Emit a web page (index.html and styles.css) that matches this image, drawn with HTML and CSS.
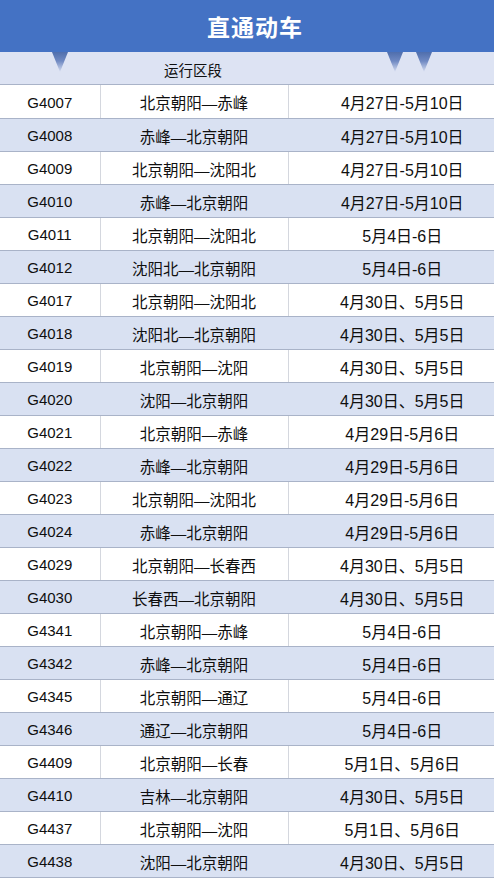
FILE: index.html
```html
<!DOCTYPE html>
<html lang="zh">
<head>
<meta charset="utf-8">
<link rel="stylesheet" href="styles.css">
</head>
<body>
<div class="page">
  <div class="title">直通动车</div>
  <div class="subhead">
    <span class="sub-label">运行区段</span>
    <span class="tri t1"></span>
    <span class="tri t2"></span>
    <span class="tri t3"></span>
  </div>
  <table class="grid">
    <colgroup><col class="c1"><col class="c2"><col class="c3"></colgroup>
    <tbody>
      <tr><td>G4007</td><td>北京朝阳—赤峰</td><td>4月27日-5月10日</td></tr>
      <tr><td>G4008</td><td>赤峰—北京朝阳</td><td>4月27日-5月10日</td></tr>
      <tr><td>G4009</td><td>北京朝阳—沈阳北</td><td>4月27日-5月10日</td></tr>
      <tr><td>G4010</td><td>赤峰—北京朝阳</td><td>4月27日-5月10日</td></tr>
      <tr><td>G4011</td><td>北京朝阳—沈阳北</td><td>5月4日-6日</td></tr>
      <tr><td>G4012</td><td>沈阳北—北京朝阳</td><td>5月4日-6日</td></tr>
      <tr><td>G4017</td><td>北京朝阳—沈阳北</td><td>4月30日、5月5日</td></tr>
      <tr><td>G4018</td><td>沈阳北—北京朝阳</td><td>4月30日、5月5日</td></tr>
      <tr><td>G4019</td><td>北京朝阳—沈阳</td><td>4月30日、5月5日</td></tr>
      <tr><td>G4020</td><td>沈阳—北京朝阳</td><td>4月30日、5月5日</td></tr>
      <tr><td>G4021</td><td>北京朝阳—赤峰</td><td>4月29日-5月6日</td></tr>
      <tr><td>G4022</td><td>赤峰—北京朝阳</td><td>4月29日-5月6日</td></tr>
      <tr><td>G4023</td><td>北京朝阳—沈阳北</td><td>4月29日-5月6日</td></tr>
      <tr><td>G4024</td><td>赤峰—北京朝阳</td><td>4月29日-5月6日</td></tr>
      <tr><td>G4029</td><td>北京朝阳—长春西</td><td>4月30日、5月5日</td></tr>
      <tr><td>G4030</td><td>长春西—北京朝阳</td><td>4月30日、5月5日</td></tr>
      <tr><td>G4341</td><td>北京朝阳—赤峰</td><td>5月4日-6日</td></tr>
      <tr><td>G4342</td><td>赤峰—北京朝阳</td><td>5月4日-6日</td></tr>
      <tr><td>G4345</td><td>北京朝阳—通辽</td><td>5月4日-6日</td></tr>
      <tr><td>G4346</td><td>通辽—北京朝阳</td><td>5月4日-6日</td></tr>
      <tr><td>G4409</td><td>北京朝阳—长春</td><td>5月1日、5月6日</td></tr>
      <tr><td>G4410</td><td>吉林—北京朝阳</td><td>4月30日、5月5日</td></tr>
      <tr><td>G4437</td><td>北京朝阳—沈阳</td><td>5月1日、5月6日</td></tr>
      <tr><td>G4438</td><td>沈阳—北京朝阳</td><td>4月30日、5月5日</td></tr>
    </tbody>
  </table>
</div>
</body>
</html>
```

FILE: styles.css
```css
html, body {
  margin: 0;
  padding: 0;
  background: #ffffff;
}
.page {
  width: 494px;
  font-family: "Liberation Sans", "Noto Sans CJK SC", sans-serif;
  color: #0f0f0f;
}
.title {
  height: 52px;
  background: #4472c4;
  color: #ffffff;
  font-size: 23px;
  font-weight: bold;
  display: flex;
  align-items: center;
  justify-content: center;
  padding-left: 16px;
  box-sizing: border-box;
  letter-spacing: 1px;
}
.subhead {
  position: relative;
  height: 33px;
  background: #dde3f3;
  display: flex;
  align-items: center;
  padding-left: 164px;
  box-sizing: border-box;
  font-size: 14.5px;
  border-bottom: 1px solid #a9b3c8;
}
.sub-label {
  padding-top: 2px;
}
.tri {
  position: absolute;
  top: 0;
  width: 16px;
  height: 20px;
  clip-path: polygon(0 0, 100% 0, 50% 100%);
  background: linear-gradient(#4f6ead 0%, #6f89c2 45%, rgba(200, 210, 235, 0.3) 100%);
}
.t1 { left: 52px; }
.t2 { left: 387px; }
.t3 { left: 416px; }
.grid {
  width: 494px;
  border-collapse: collapse;
  table-layout: fixed;
  font-size: 15.5px;
}
.c1 { width: 100px; }
.c2 { width: 188px; }
.c3 { width: 206px; }
.grid td {
  height: 33px;
  box-sizing: border-box;
  padding: 2px 0 0 0;
  text-align: center;
  vertical-align: middle;
  border-bottom: 1px solid #a9b3c8;
  border-left: 1px solid #d4d7de;
  white-space: nowrap;
}
.grid td:first-child {
  border-left: none;
  font-size: 15px;
}
.grid tr:nth-child(even) td {
  background: #d9e1f2;
  border-left-color: #d9e1f2;
}
.grid td:nth-child(3) {
  font-size: 16px;
  padding-left: 22px;
}
```
